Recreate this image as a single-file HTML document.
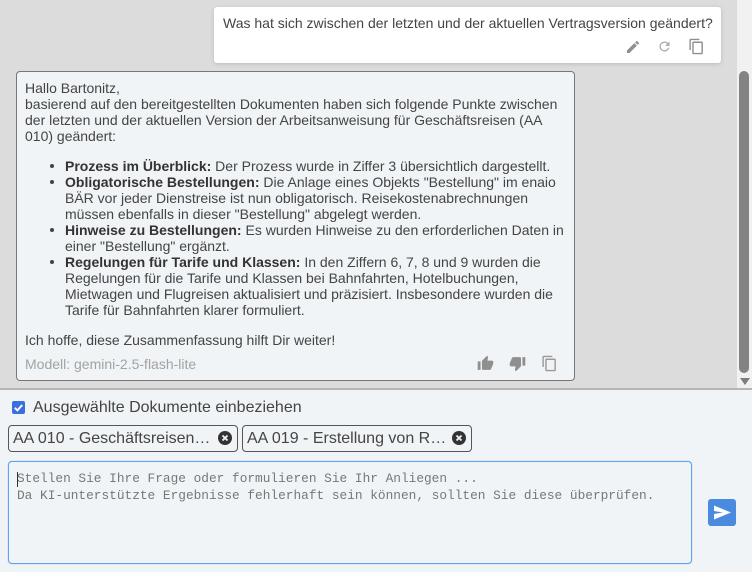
<!DOCTYPE html>
<html><head><meta charset="utf-8">
<style>
html,body{margin:0;padding:0;width:752px;height:572px;overflow:hidden;background:#dcdcdc;font-family:"Liberation Sans",sans-serif;color:#444;}
#w{position:absolute;left:0;top:0;width:752px;height:572px;overflow:hidden;filter:blur(.35px);}
.a{position:absolute;white-space:nowrap;}
.l{position:absolute;white-space:nowrap;font-size:14px;line-height:16px;height:16px;color:#444;}
b{color:#333;font-weight:700;}
.bu{position:absolute;left:50px;width:4px;height:4px;border-radius:50%;background:#444;}
svg{position:absolute;}
.chip{position:absolute;top:425px;height:27px;border:1px solid #555;border-radius:4px;box-sizing:border-box;background:#f0f4f6;font-size:16px;line-height:25px;color:#444;padding-left:4px;white-space:nowrap;}
</style></head>
<body><div id="w">
<div class="a" style="left:214px;top:7px;width:507px;height:56px;background:#fff;border-radius:3px;box-shadow:0 1px 4px rgba(0,0,0,.15);"></div>
<div class="l" style="left:223px;top:15px;">Was hat sich zwischen der letzten und der aktuellen Vertragsversion geändert?</div>
<svg style="left:625px;top:39px" width="16" height="16" viewBox="0 0 24 24" fill="#8f8f8f"><path d="M3 17.25V21h3.75L17.81 9.94l-3.75-3.75L3 17.25zM20.71 7.04a1 1 0 0 0 0-1.41l-2.34-2.34a1 1 0 0 0-1.41 0l-1.83 1.83 3.75 3.75 1.83-1.83z"/></svg>
<svg style="left:657px;top:39px" width="15" height="15" viewBox="0 0 24 24" fill="#a6a6a6"><path d="M17.65 6.35A7.96 7.96 0 0 0 12 4a8 8 0 1 0 7.73 10h-2.08A6 6 0 1 1 12 6c1.66 0 3.14.69 4.22 1.78L13 11h7V4l-2.35 2.35z"/></svg>
<svg style="left:688px;top:38px" width="17" height="17" viewBox="0 0 24 24" fill="#8f8f8f"><path d="M16 1H4a2 2 0 0 0-2 2v14h2V3h12V1zm3 4H8a2 2 0 0 0-2 2v14a2 2 0 0 0 2 2h11a2 2 0 0 0 2-2V7a2 2 0 0 0-2-2zm0 16H8V7h11v14z"/></svg>

<div class="a" style="left:16px;top:71px;width:559px;height:310px;box-sizing:border-box;background:#f0f4f6;border:1px solid #777;border-radius:4px;"></div>
<div class="l" style="left:25px;top:80px">Hallo Bartonitz,</div>
<div class="l" style="left:25px;top:96px">basierend auf den bereitgestellten Dokumenten haben sich folgende Punkte zwischen</div>
<div class="l" style="left:25px;top:112px">der letzten und der aktuellen Version der Arbeitsanweisung für Geschäftsreisen (AA</div>
<div class="l" style="left:25px;top:128px">010) geändert:</div>

<div class="bu" style="top:164px"></div>
<div class="l" style="left:65px;top:158px"><b>Prozess im Überblick:</b> Der Prozess wurde in Ziffer 3 übersichtlich dargestellt.</div>
<div class="bu" style="top:180px"></div>
<div class="l" style="left:65px;top:174px"><b>Obligatorische Bestellungen:</b> Die Anlage eines Objekts "Bestellung" im enaio</div>
<div class="l" style="left:65px;top:190px">BÄR vor jeder Dienstreise ist nun obligatorisch. Reisekostenabrechnungen</div>
<div class="l" style="left:65px;top:206px">müssen ebenfalls in dieser "Bestellung" abgelegt werden.</div>
<div class="bu" style="top:228px"></div>
<div class="l" style="left:65px;top:222px"><b>Hinweise zu Bestellungen:</b> Es wurden Hinweise zu den erforderlichen Daten in</div>
<div class="l" style="left:65px;top:238px">einer "Bestellung" ergänzt.</div>
<div class="bu" style="top:260px"></div>
<div class="l" style="left:65px;top:254px"><b>Regelungen für Tarife und Klassen:</b> In den Ziffern 6, 7, 8 und 9 wurden die</div>
<div class="l" style="left:65px;top:270px">Regelungen für die Tarife und Klassen bei Bahnfahrten, Hotelbuchungen,</div>
<div class="l" style="left:65px;top:286px">Mietwagen und Flugreisen aktualisiert und präzisiert. Insbesondere wurden die</div>
<div class="l" style="left:65px;top:302px">Tarife für Bahnfahrten klarer formuliert.</div>
<div class="l" style="left:25px;top:332px">Ich hoffe, diese Zusammenfassung hilft Dir weiter!</div>
<div class="l" style="left:25px;top:356px;color:#a3a3a3">Modell: gemini-2.5-flash-lite</div>
<svg style="left:477px;top:355px" width="17" height="17" viewBox="0 0 24 24" fill="#8f8f8f"><path d="M1 21h4V9H1v12zm22-11a2 2 0 0 0-2-2h-6.31l.95-4.57.03-.32c0-.41-.17-.79-.44-1.06L14.17 1 7.59 7.59C7.22 7.95 7 8.45 7 9v10a2 2 0 0 0 2 2h9c.83 0 1.54-.5 1.84-1.22l3.02-7.05c.09-.23.14-.47.14-.73v-2z"/></svg>
<svg style="left:509px;top:355px" width="17" height="17" viewBox="0 0 24 24" fill="#8f8f8f"><path d="M15 3H6c-.83 0-1.54.5-1.84 1.22l-3.02 7.05c-.09.23-.14.47-.14.73v2a2 2 0 0 0 2 2h6.31l-.95 4.57-.03.32c0 .41.17.79.44 1.06L9.83 23l6.59-6.59c.36-.36.58-.86.58-1.41V5a2 2 0 0 0-2-2zm4 0v12h4V3h-4z"/></svg>
<svg style="left:541px;top:355px" width="17" height="17" viewBox="0 0 24 24" fill="#9a9a9a"><path d="M16 1H4a2 2 0 0 0-2 2v14h2V3h12V1zm3 4H8a2 2 0 0 0-2 2v14a2 2 0 0 0 2 2h11a2 2 0 0 0 2-2V7a2 2 0 0 0-2-2zm0 16H8V7h11v14z"/></svg>

<!-- scrollbar -->
<div class="a" style="left:737px;top:0;width:15px;height:389px;background:#f1f1f1;"></div>
<div class="a" style="left:739px;top:71px;width:10px;height:302px;background:#838383;border-radius:5px;"></div>
<div class="a" style="left:740px;top:378px;width:0;height:0;border-left:5px solid transparent;border-right:5px solid transparent;border-top:7px solid #7d7d7d;"></div>

<!-- bottom -->
<div class="a" style="left:0;top:388px;width:752px;height:184px;background:#f0f4f6;border-top:2px solid #b5b5b5;box-sizing:border-box;"></div>
<div class="a" style="left:12px;top:401px;width:13px;height:13px;background:#3b6fe0;border-radius:2px;"></div>
<svg style="left:12px;top:401px" width="13" height="13" viewBox="0 0 13 13"><path d="M2.8 6.8l2.6 2.6 4.8-5.4" fill="none" stroke="#fff" stroke-width="1.9"/></svg>
<div class="a" style="left:33px;top:399px;font-size:16px;line-height:18px;color:#444;">Ausgewählte Dokumente einbeziehen</div>

<div class="chip" style="left:8px;width:230px;">AA 010 - Geschäftsreisen…</div>
<svg style="left:218px;top:431px" width="14" height="14" viewBox="0 0 14 14"><circle cx="7" cy="7" r="7" fill="#333"/><path d="M4.5 4.5l5 5M9.5 4.5l-5 5" stroke="#f0f4f6" stroke-width="1.8"/></svg>
<div class="chip" style="left:242px;width:230px;">AA 019 - Erstellung von R…</div>
<svg style="left:452px;top:431px" width="14" height="14" viewBox="0 0 14 14"><circle cx="7" cy="7" r="7" fill="#333"/><path d="M4.5 4.5l5 5M9.5 4.5l-5 5" stroke="#f0f4f6" stroke-width="1.8"/></svg>

<div class="a" style="left:8px;top:461px;width:684px;height:103px;box-sizing:border-box;background:#f0f4f6;border:1px solid #5fa5ee;border-radius:4px;box-shadow:0 0 1px #72aef0;"></div>
<div class="a" style="left:17px;top:470px;font-family:'Liberation Mono',monospace;font-size:12.8px;line-height:17px;color:#777;">Stellen Sie Ihre Frage oder formulieren Sie Ihr Anliegen ...<br>Da KI-unterstützte Ergebnisse fehlerhaft sein können, sollten Sie diese überprüfen.</div>
<div class="a" style="left:17px;top:472px;width:1px;height:15px;background:#333;"></div>

<div class="a" style="left:708px;top:499px;width:28px;height:27px;background:#4a8be0;border-radius:3px;"></div>
<svg style="left:708px;top:499px" width="28" height="27" viewBox="0 0 28 27"><path d="M6 6.5L23 13.5 6 20.5 6 15 15 13.5 6 12z" fill="#fff"/></svg>
</div></body></html>
